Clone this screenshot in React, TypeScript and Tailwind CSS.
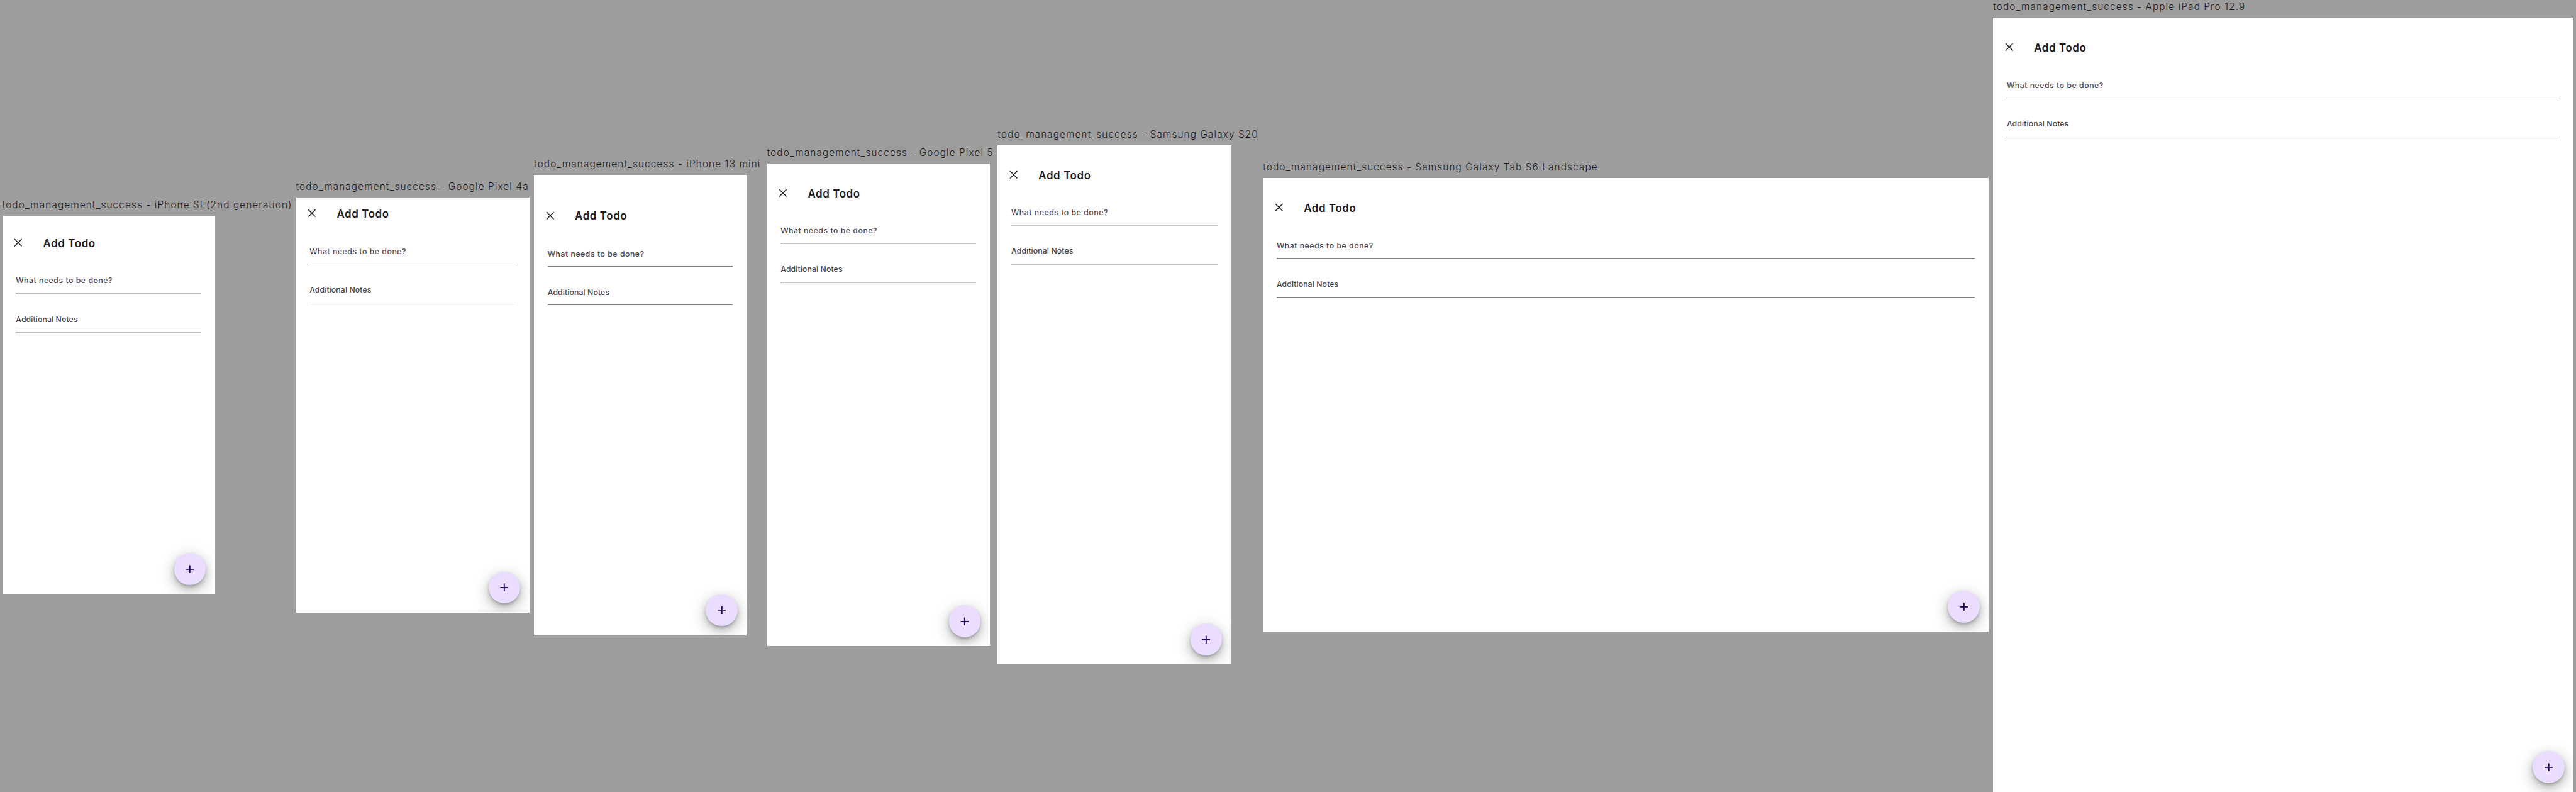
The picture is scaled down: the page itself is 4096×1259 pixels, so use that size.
type Device = {
  name: string;
  column: string;
  screen: string;
  inset: string;
  soft?: boolean;
};

const devices: Device[] = [
  { name: "iPhone SE(2nd generation)", column: "w-[518px]", screen: "w-[375px] h-[667px]", inset: "pt-[20px]", soft: true },
  { name: "Google Pixel 4a", column: "w-[420px]", screen: "w-[412px] h-[732px]", inset: "pt-0" },
  { name: "iPhone 13 mini", column: "w-[411px]", screen: "w-[375px] h-[812px]", inset: "pt-[44px]" },
  { name: "Google Pixel 5", column: "w-[407px]", screen: "w-[393px] h-[851px]", inset: "pt-[24px]", soft: true },
  { name: "Samsung Galaxy S20", column: "w-[468px]", screen: "w-[412px] h-[915px]", inset: "pt-[24px]", soft: true },
  { name: "Samsung Galaxy Tab S6 Landscape", column: "w-[1288px]", screen: "w-[1280px] h-[800px]", inset: "pt-[24px]" },
  { name: "Apple iPad Pro 12.9", column: "w-[1032px]", screen: "w-[1024px] h-[1366px]", inset: "pt-[24px]" },
];

function Field({ label, spacing, soft }: { label: string; spacing: string; soft?: boolean }) {
  return (
    <div className="flex h-[68px] flex-col justify-end">
      <div className={`mb-[9.5px] flex h-[24px] items-center whitespace-nowrap text-[13.6px] font-[450] text-[#49454f] ${spacing}`}>
        {label}
      </div>
      <div className={soft ? "h-[2.22px] bg-[#bfbec5]" : "h-[1.11px] bg-[#7e7d85]"} />
    </div>
  );
}

function Screen({ device }: { device: Device }) {
  return (
    <div className={`relative flex flex-col overflow-hidden bg-white ${device.screen} ${device.inset}`}>
      <header className="flex h-[56px] shrink-0 items-center">
        <div className="flex w-[56px] justify-center">
          <svg className="size-6" viewBox="0 0 24 24" fill="none" stroke="#1c1b1f" strokeWidth="1.7">
            <path d="M5.6 5.6 18.4 18.4M18.4 5.6 5.6 18.4" />
          </svg>
        </div>
        <h1 className="mt-[3px] ml-4 whitespace-nowrap text-[18.8px] leading-[28px] font-semibold tracking-[0.65px] text-[#1c1b1f]">
          Add Todo
        </h1>
      </header>
      <div className="-mt-[5.5px] flex flex-col px-6">
        <Field label="What needs to be done?" spacing="tracking-[0.6px]" soft={device.soft} />
        <Field label="Additional Notes" spacing="tracking-[0.12px]" soft={device.soft} />
      </div>
      <button className="absolute right-4 bottom-4 flex size-14 items-center justify-center rounded-full bg-[#eaddff] shadow-[0_3px_5px_-1px_rgba(0,0,0,0.2),0_6px_12px_rgba(0,0,0,0.14),0_8px_28px_rgba(0,0,0,0.28)]">
        <svg className="size-6" viewBox="0 0 24 24" fill="#21005d">
          <path d="M19 13h-6v6h-2v-6H5v-2h6V5h2v6h6z" />
        </svg>
      </button>
    </div>
  );
}

export default function App() {
  return (
    <div className="h-[1259px] w-[4096px] overflow-hidden bg-[#9e9e9e] font-['Inter',sans-serif]">
      <div className="flex h-[1397px] w-[4544px] items-center [zoom:0.90141]">
        {devices.map((device) => (
          <div key={device.name} className={`shrink-0 pl-1 ${device.column}`}>
            <div className="h-[31px] whitespace-nowrap text-[17px] leading-[24px] font-light tracking-[1.23px] text-[#1c1b1f]">
              todo_management_success - {device.name}
            </div>
            <Screen device={device} />
          </div>
        ))}
      </div>
    </div>
  );
}
